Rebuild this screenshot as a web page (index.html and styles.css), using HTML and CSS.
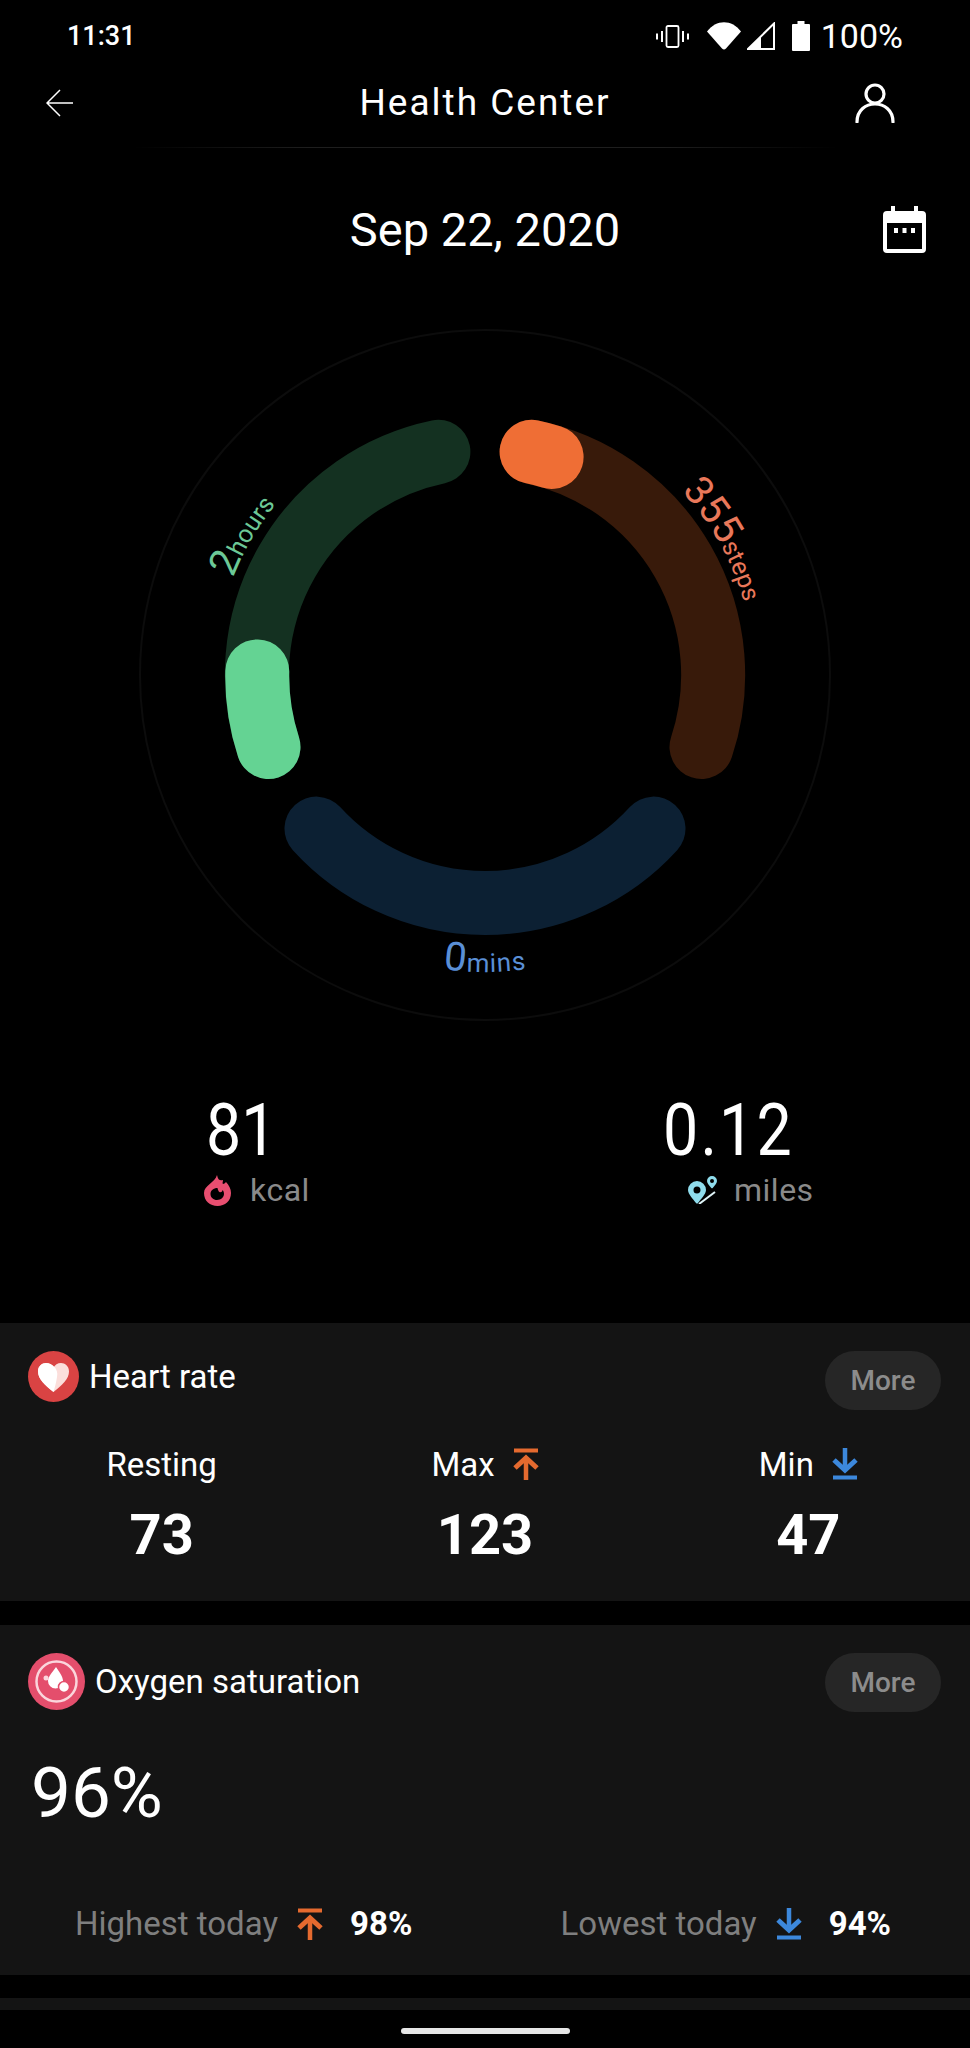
FILE: index.html
```html
<!DOCTYPE html>
<html lang="en">
<head>
    <meta charset="UTF-8">
    <meta name="viewport" content="width=device-width, initial-scale=1.0">
    <title>Health Center</title>
    <link rel="stylesheet" href="styles.css">
</head>
<body>
    <main class="screen">
        <div class="statusbar">
            <span class="time">11:31</span>
            <div class="status-icons">
                <svg class="ic-vibrate" viewBox="0 0 33 23" width="33" height="23" fill="none" stroke="#fff">
                    <rect x="10.500" y="1" width="12" height="21" rx="1.500" stroke-width="1.800"/>
                    <path d="M6 6v11M27 6v11M1 8.500v6M32 8.500v6" stroke-width="2"/>
                </svg>
                <svg class="ic-wifi" viewBox="0 0 34 28" width="34" height="28"><path d="M0 9.500C9-3 25-3 34 9.500L19 26.500q-2 2-4 0z" fill="#fff"/></svg>
                <svg class="ic-signal" viewBox="0 0 28 28" width="28" height="28"><path d="M27 1.500v25.500H1z" fill="none" stroke="#fff" stroke-width="2"/><path d="M14 14v13H1z" fill="#fff"/></svg>
                <svg class="ic-battery" viewBox="0 0 18 30" width="18" height="30"><path d="M5.500 0h7v3H17q1 0 1 1v25q0 1-1 1H1q-1 0-1-1V4q0-1 1-1h4.500z" fill="#fff"/></svg>
                <span class="battery">100%</span>
            </div>
        </div>

        <header class="topbar">
            <svg class="ic-back" viewBox="0 0 27 28" width="27" height="28" fill="none" stroke="#fff" stroke-width="1.500"><path d="M14 1L1 14l13 13M1 14h26"/></svg>
            <h1 class="title">Health Center</h1>
            <svg class="ic-user" viewBox="0 0 40 40" width="40" height="40" fill="none" stroke="#fff" stroke-width="3.200"><circle cx="20" cy="11" r="9"/><path d="M2 39c0-24 36-24 36 0" stroke-linecap="round"/></svg>
        </header>
        <div class="divider"></div>

        <div class="daterow">
            <span></span>
            <div class="date">Sep 22, 2020</div>
            <svg class="ic-cal" viewBox="0 0 43 47" width="43" height="47">
                <path d="M8 0h4v5h19V0h4v5h4q4 0 4 4v34q0 4-4 4H4q-4 0-4-4V9q0-4 4-4h4z" fill="#fff"/>
                <rect x="4" y="17" width="35" height="26" fill="#000"/>
                <path d="M11 22h4v5h-4zM19.500 22h4v5h-4zM28 22h4v5h-4z" fill="#fff"/>
            </svg>
        </div>

        <svg class="ring" viewBox="-350 -350 700 700" width="700" height="700">
            <defs>
                <path id="arc-left" d="M-270 0A270 270 0 0 1 0-270"/>
                <path id="arc-right" d="M0-269A269 269 0 0 1 269 0"/>
                <path id="arc-bottom" d="M-297 0A297 297 0 0 0 297 0"/>
            </defs>
            <circle r="345" fill="none" stroke="#0c0c0c" stroke-width="2"/>
            <g fill="none" stroke-width="64" stroke-linecap="round">
                <path stroke="#143121" d="M-216.500 72A228 228 0 0 1-46.600-223.200"/>
                <path stroke="#64d393" d="M-216.500 72A228 228 0 0 1-227.700-3.600"/>
                <path stroke="#381a0a" d="M46.600-223.200A228 228 0 0 1 216.500 72"/>
                <path stroke="#ef6e35" d="M46.600-223.200A228 228 0 0 1 66.600-218"/>
                <path stroke="#0c2033" d="M168.500 153.600A228 228 0 0 1-168.500 153.600"/>
            </g>
            <text class="ring-label ring-tight" fill="#6cc896"><textPath href="#arc-left" startOffset="99"><tspan class="ring-num">2</tspan>hours</textPath></text>
            <text class="ring-label ring-tight" fill="#e9785a"><textPath href="#arc-right" startOffset="220"><tspan class="ring-num">355</tspan>steps</textPath></text>
            <text class="ring-label" fill="#5a8fd6" text-anchor="middle"><textPath href="#arc-bottom" startOffset="50%"><tspan class="ring-num">0</tspan>mins</textPath></text>
        </svg>

        <section class="stats">
            <div class="stat">
                <div class="stat-num">81</div>
                <div class="stat-label">
                    <svg viewBox="0 0 27 31" width="27" height="31"><path fill-rule="evenodd" d="M13 0c1 5 3 6 6 5 0 2-1 3 0 4 1 0 2-1 3-2 3 3 5 7 5 11 0 8-6 13-13.500 13S0 26 0 18C0 10 11 8 13 0zM13.500 13c-4 0-7 2.500-7 6s3 6 6.500 6c4 0 7-3 7-6 0-1.500-.5-3-1.500-4 0 2-2 2.500-3 2s-1.500-2-2-4z" fill="#e84e70"/></svg>
                    <span>kcal</span>
                </div>
            </div>
            <div class="stat stat-miles">
                <div class="stat-num">0.12</div>
                <div class="stat-label">
                    <svg viewBox="0 0 29 28" width="29" height="28" fill="#8fdcec">
                        <path fill-rule="evenodd" d="M9 5a9 9 0 0 1 9 9c0 4-5 9-8 13q-1 1-2 0c-3-4-8-9-8-13a9 9 0 0 1 9-9zm0 5.500a3.500 3.500 0 1 0 0 7 3.500 3.500 0 0 0 0-7z"/>
                        <path fill-rule="evenodd" d="M24 0a5 5 0 0 1 5 5c0 2-2.500 5-4.300 7q-.7.700-1.400 0C21.500 10 19 7 19 5a5 5 0 0 1 5-5zm0 3a2 2 0 1 0 0 4 2 2 0 0 0 0-4z"/>
                        <path d="M11 28l16-12" fill="none" stroke="#dff4f8" stroke-width="2"/>
                    </svg>
                    <span>miles</span>
                </div>
            </div>
        </section>

        <section class="card card-heart">
            <div class="card-head">
                <div class="card-name">
                    <svg class="badge" viewBox="0 0 51 51" width="51" height="51">
                        <circle cx="25.500" cy="25.500" r="25.500" fill="#d94343"/>
                        <path d="M25.500 41C17 34 10 28 10 20.500 10 15 14 12 18 12c3.500 0 6 2 7.500 4.500C27 14 29.500 12 33 12c4 0 8 3 8 8.500C41 28 34 34 25.500 41z" fill="#fbdedb"/>
                        <path d="M25.500 41C17 34 10 28 10 20.500 10 15 14 12 18 12c6 0 13 6 11 14-.7 5-2 10-3.500 15z" fill="#fff"/>
                    </svg>
                    <h2>Heart rate</h2>
                </div>
                <button class="more">More</button>
            </div>
            <div class="hr-cols">
                <div class="hr-col">
                    <div class="hr-label">Resting</div>
                    <div class="hr-value">73</div>
                </div>
                <div class="hr-col">
                    <div class="hr-label">Max
                        <svg class="trend" viewBox="0 0 26 32" width="26" height="32" fill="none" stroke="#e56a2f"><path d="M1 2.500h24" stroke-width="4"/><path d="M13 32V10" stroke-width="4.500"/><path d="M2 20L13 10l11 10" stroke-width="5"/></svg>
                    </div>
                    <div class="hr-value">123</div>
                </div>
                <div class="hr-col">
                    <div class="hr-label">Min
                        <svg class="trend" viewBox="0 0 26 32" width="26" height="32" fill="none" stroke="#3c88dc"><path d="M1 29.500h24" stroke-width="4"/><path d="M13 0v22" stroke-width="4.500"/><path d="M2 12l11 10 11-10" stroke-width="5"/></svg>
                    </div>
                    <div class="hr-value">47</div>
                </div>
            </div>
        </section>

        <section class="card card-oxygen">
            <div class="card-head">
                <div class="card-name">
                    <svg class="badge" viewBox="0 0 57 57" width="57" height="57">
                        <circle cx="28.500" cy="28.500" r="28.500" fill="#e44e6c"/>
                        <circle cx="28.500" cy="28.500" r="20" fill="none" stroke="#fbd5dc" stroke-width="2.500"/>
                        <path d="M28 14c3 5 7 9 7 14a7.500 7.500 0 0 1-15 0c0-5 5-9 8-14z" fill="#fff"/>
                        <circle cx="36" cy="34" r="5.500" fill="#fff" stroke="#e44e6c" stroke-width="1.500"/>
                        <circle cx="18" cy="25" r="2.500" fill="#fbd5dc"/>
                    </svg>
                    <h2>Oxygen saturation</h2>
                </div>
                <button class="more">More</button>
            </div>
            <div class="oxygen-now">96%</div>
            <div class="oxygen-range">
                <div class="range-item">
                    <span class="range-label">Highest today</span>
                    <svg class="trend" viewBox="0 0 26 32" width="26" height="32" fill="none" stroke="#e56a2f"><path d="M1 2.500h24" stroke-width="4"/><path d="M13 32V10" stroke-width="4.500"/><path d="M2 20L13 10l11 10" stroke-width="5"/></svg>
                    <span class="range-value">98%</span>
                </div>
                <div class="range-item">
                    <span class="range-label">Lowest today</span>
                    <svg class="trend" viewBox="0 0 26 32" width="26" height="32" fill="none" stroke="#3c88dc"><path d="M1 29.500h24" stroke-width="4"/><path d="M13 0v22" stroke-width="4.500"/><path d="M2 12l11 10 11-10" stroke-width="5"/></svg>
                    <span class="range-value">94%</span>
                </div>
            </div>
        </section>

        <section class="card card-next"></section>
        <div class="home-pill"></div>
    </main>
</body>
</html>
```

FILE: styles.css
```css
* {
    box-sizing: border-box;
}
html, body {
    margin: 0;
    padding: 0;
    background: #000;
}
body {
    font-family: Roboto, sans-serif;
    color: #fff;
    overflow: hidden;
}
.screen {
    width: 970px;
    height: 2048px;
    overflow: hidden;
}
svg {
    display: block;
}

/* status bar */
.statusbar {
    height: 70px;
    padding: 2px 67px 0;
    display: flex;
    justify-content: space-between;
    align-items: center;
}
.time {
    font-size: 27px;
    font-weight: 500;
}
.status-icons {
    display: flex;
    align-items: center;
}
.ic-wifi {
    margin-left: 18px;
}
.ic-signal {
    margin-left: 6px;
}
.ic-battery {
    margin-left: 17px;
}
.battery {
    margin-left: 11px;
    font-size: 34px;
}

/* header */
.topbar {
    height: 77px;
    padding: 0 46px 12px;
    display: grid;
    grid-template-columns: 1fr auto 1fr;
    align-items: center;
}
.ic-user {
    justify-self: end;
    margin-right: 29px;
}
.title {
    margin: 0;
    font-size: 37px;
    font-weight: 400;
    letter-spacing: 2px;
}
.divider {
    width: 705px;
    height: 1px;
    margin: 0 auto;
    background: linear-gradient(90deg, #000, #1e1e1e 25%, #1e1e1e 75%, #000);
}

/* date */
.daterow {
    height: 162px;
    padding: 0 44px;
    display: grid;
    grid-template-columns: 1fr auto 1fr;
    align-items: center;
    justify-items: end;
}
.date {
    font-size: 47px;
}
.ring {
    margin: 15px auto 0;
}
.ring-label {
    font-size: 26px;
    letter-spacing: 1px;
}
.ring-tight {
    font-size: 25px;
    letter-spacing: 0;
}
.ring-num {
    font-size: 40px;
}

/* kcal and miles */
.stats {
    height: 298px;
    padding: 70px 0 0 204px;
    display: grid;
    grid-template-columns: 462px 1fr;
    align-content: start;
}
.stat-num {
    margin-left: 2px;
    font-size: 72px;
    line-height: 72px;
    transform: scaleX(.87);
    transform-origin: left;
}
.stat-miles .stat-num {
    margin-left: -3px;
    letter-spacing: 2.500px;
}
.stat-label {
    margin-top: 4px;
    display: flex;
    align-items: center;
    gap: 19px;
    color: #8a8a8a;
    font-size: 32px;
    letter-spacing: .5px;
}
.stat-miles .stat-label {
    margin-left: 22px;
    gap: 17px;
}

/* cards */
.card {
    background: #141414;
    margin-bottom: 24px;
}
.card-heart {
    height: 278px;
    padding-top: 28px;
}
.card-oxygen {
    height: 350px;
    padding-top: 28px;
    margin-bottom: 23px;
}
.card-next {
    height: 12px;
    margin-bottom: 18px;
}
.card-head {
    padding: 0 29px 0 28px;
    display: flex;
    justify-content: space-between;
    align-items: flex-start;
}
.card-name {
    display: flex;
    align-items: center;
    gap: 10px;
}
.card-name h2 {
    margin: 0;
    font-size: 33px;
    font-weight: 400;
}
.more {
    width: 116px;
    height: 59px;
    border: none;
    border-radius: 30px;
    background: #262626;
    color: #8c8c8c;
    font-family: Roboto, sans-serif;
    font-size: 28px;
    font-weight: 500;
    padding: 0;
}

.hr-cols {
    margin-top: 38px;
    display: grid;
    grid-template-columns: repeat(3, 1fr);
    text-align: center;
}
.hr-label {
    height: 32px;
    display: flex;
    justify-content: center;
    align-items: center;
    gap: 18px;
    font-size: 33px;
}
.hr-value {
    margin-top: 26px;
    font-size: 56px;
    line-height: 58px;
    font-weight: 700;
}

.oxygen-now {
    margin: 41px 0 0 31px;
    font-size: 71px;
    line-height: 80px;
}
.oxygen-range {
    margin-top: 71px;
    padding: 0 79px 0 75px;
    display: flex;
    justify-content: space-between;
}
.range-item {
    display: flex;
    align-items: center;
}
.range-label {
    color: #7f7f7f;
    font-size: 33px;
}
.range-item .trend {
    margin-left: 19px;
}
.range-value {
    margin-left: 27px;
    font-size: 33px;
    font-weight: 700;
}

.home-pill {
    width: 169px;
    height: 6px;
    margin: 0 auto;
    border-radius: 3px;
    background: #e6e6e6;
}
```
